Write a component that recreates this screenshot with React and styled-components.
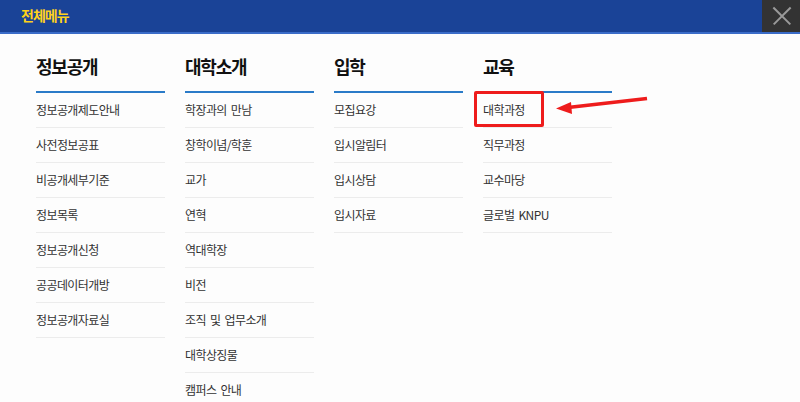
import React from "react";
import styled, { createGlobalStyle } from "styled-components";

const GlobalStyle = createGlobalStyle`
body {
  margin: 0;
  background: #fdfdfd;
  font-family: "Noto Sans CJK KR", "Noto Sans", sans-serif;
}
`;

const menus = [
  {
    title: "정보공개",
    items: ["정보공개제도안내", "사전정보공표", "비공개세부기준", "정보목록", "정보공개신청", "공공데이터개방", "정보공개자료실"],
  },
  {
    title: "대학소개",
    items: ["학장과의 만남", "창학이념/학훈", "교가", "연혁", "역대학장", "비전", "조직 및 업무소개", "대학상징물", "캠퍼스 안내"],
  },
  {
    title: "입학",
    items: ["모집요강", "입시알림터", "입시상담", "입시자료"],
  },
  {
    title: "교육",
    items: ["대학과정", "직무과정", "교수마당", "글로벌 KNPU"],
  },
];

const Page = styled.div`
position: relative;
width: 800px;
height: 402px;
overflow: hidden;
`;

const Header = styled.div`
display: flex;
justify-content: space-between;
align-items: stretch;
height: 32px;
background: #1a4397;
border-bottom: 2px solid #3a6cc8;
`;

const Title = styled.div`
padding-left: 21px;
line-height: 30px;
font-size: 14px;
font-weight: 700;
letter-spacing: -1px;
color: #ffd21a;
`;

const CloseButton = styled.div`
position: relative;
width: 38px;
background: #333333;
&::before,
&::after {
  content: "";
  position: absolute;
  left: 8px;
  top: 15px;
  width: 24px;
  height: 1.5px;
  background: #9a9a9a;
}
&::before { transform: rotate(45deg); }
&::after { transform: rotate(-45deg); }
`;

const Menu = styled.div`
display: grid;
grid-template-columns: repeat(4, 129px);
column-gap: 20px;
padding-left: 36px;
`;

const Column = styled.div`
position: relative;
display: flex;
flex-direction: column;
`;

const Heading = styled.div`
box-sizing: border-box;
height: 59px;
padding-top: 19px;
line-height: 26px;
font-size: 18px;
font-weight: 700;
letter-spacing: -1.2px;
color: #111;
border-bottom: 2px solid #2a7bc8;
`;

const Item = styled.div`
height: 34px;
line-height: 34px;
font-size: 12px;
letter-spacing: -0.6px;
word-spacing: 2px;
color: #333;
border-bottom: 1px solid #ececec;
`;

const Highlight = styled.div`
position: absolute;
left: -9px;
top: 57px;
width: 70px;
height: 36px;
box-sizing: border-box;
border: 3px solid #ee1c1c;
border-radius: 2px;
`;

const Arrow = styled.svg`
position: absolute;
left: 0;
top: 0;
pointer-events: none;
`;

export default function App() {
  return (
    <Page>
      <GlobalStyle />
      <Header>
        <Title>전체메뉴</Title>
        <CloseButton />
      </Header>
      <Menu>
        {menus.map((menu) => (
          <Column key={menu.title}>
            <Heading>{menu.title}</Heading>
            {menu.items.map((item) => (
              <Item key={item}>{item}</Item>
            ))}
            {menu.title === "교육" && <Highlight />}
          </Column>
        ))}
      </Menu>
      <Arrow width="800" height="402">
        <line x1="647" y1="98.5" x2="568" y2="107.5" stroke="#ee1c1c" strokeWidth="3.5" />
        <polygon points="556,108.5 571,102 572,114" fill="#ee1c1c" />
      </Arrow>
    </Page>
  );
}
